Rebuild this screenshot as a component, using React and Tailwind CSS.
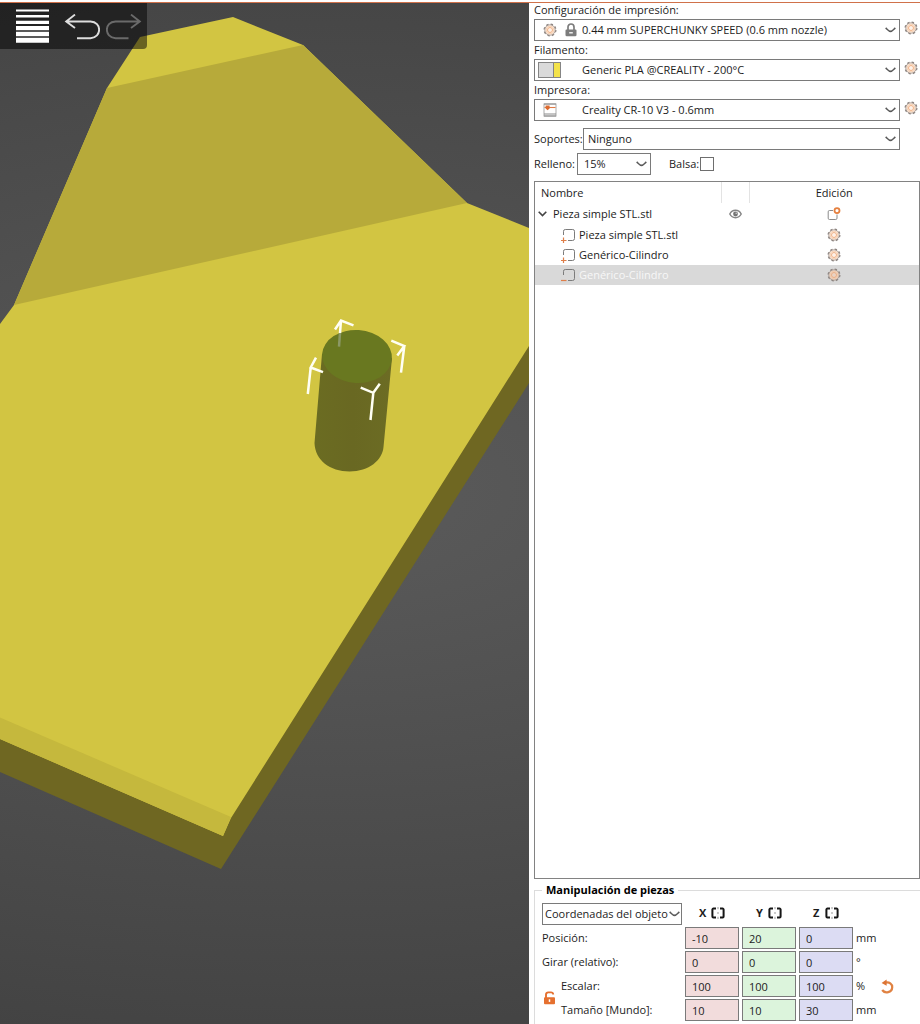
import React from "react";

function Chevron({ className = "" }) {
  return (
    <svg
      className={"pointer-events-none absolute top-1/2 h-[6px] w-[11px] -translate-y-1/2 " + className}
      viewBox="0 0 11 6"
      fill="none"
      stroke="#5a5a5a"
      strokeWidth="1.6"
      aria-hidden="true"
    >
      <path d="M0.7 0.9 C2 2 3.8 4.4 5.5 4.4 C7.2 4.4 9 2 10.3 0.9" />
    </svg>
  );
}

function Gear({ fill = "#fdf1e8" }) {
  return (
    <svg className="h-[14px] w-[14px] shrink-0" viewBox="0 0 14 14" fill="none" aria-hidden="true">
      <circle cx="7" cy="7" r="5.2" fill={fill} stroke="#a89a92" strokeWidth="0.9" />
      <circle cx="7" cy="7" r="5.9" stroke="#8c8480" strokeWidth="1.2" strokeDasharray="2.4 2.23" />
      <circle cx="7" cy="7" r="3.9" stroke="#f3c7a4" strokeWidth="0.8" />
      <circle cx="7" cy="7" r="2.5" stroke="#eeaa7c" strokeWidth="0.9" />
    </svg>
  );
}

function Lock() {
  return (
    <svg className="h-[14px] w-[12px]" viewBox="0 0 12 14" fill="none" aria-hidden="true">
      <path d="M3 7 V4 a3 3 0 0 1 6 0 V7" stroke="#7c7c7c" strokeWidth="1.7" />
      <path d="M1.5 6.5 h9 a1 1 0 0 1 1 1 v4.5 a1.3 1.3 0 0 1 -1.3 1.3 h-8.4 a1.3 1.3 0 0 1 -1.3 -1.3 v-4.5 a1 1 0 0 1 1 -1 Z" fill="#7c7c7c" />
      <path d="M4.2 9.8 h3.6" stroke="#fff" strokeWidth="1.3" />
    </svg>
  );
}

function PrinterIcon() {
  return (
    <svg className="h-[14px] w-[14px]" viewBox="0 0 14 14" fill="none" aria-hidden="true">
      <rect x="1" y="1" width="12" height="12" stroke="#ababab" />
      <path d="M1 1 h12 M1 11 h12 M1 13 h12" stroke="#8a8a8a" />
      <path d="M1.5 4.5 h11" stroke="#e07a45" strokeWidth="1.1" />
      <path d="M2.6 2.6 h4 v3 l-2 1.6 l-2 -1.6 Z" fill="#db6a30" />
    </svg>
  );
}

function Preset({ id, label, value, icon }) {
  return (
    <div>
      <label htmlFor={id} className="block h-4 leading-[14px]">
        {label}
      </label>
      <div className="flex items-center gap-1">
        <div className="relative flex-1">
          <select
            id={id}
            className="block h-[22px] w-full appearance-none border border-[#7a7a7a] bg-white pl-[47px] pr-6"
          >
            <option>{value}</option>
          </select>
          <span className="pointer-events-none absolute inset-y-0 left-0 flex items-center">{icon}</span>
          <Chevron className="right-[4px]" />
        </div>
        <button type="button" aria-label={"Editar " + label} className="-mt-1">
          <Gear />
        </button>
      </div>
    </div>
  );
}

function PartIcon({ minus }) {
  return (
    <svg className="h-[15px] w-[16px] shrink-0" viewBox="0 0 16 15" fill="none" aria-hidden="true">
      <path d="M3.5 7 V3.3 a1.8 1.8 0 0 1 1.8 -1.8 H12.7 a1.8 1.8 0 0 1 1.8 1.8 V10.5 a2 2 0 0 1 -2 2 H8" stroke="#7b7b7b" />
      <path d={minus ? "M1 12.5 H6.5" : "M1 12.5 H6.5 M3.5 9.5 V15"} stroke="#de7f4a" strokeWidth="1.2" />
    </svg>
  );
}

function ObjectRow({ name, minus, selected }) {
  return (
    <tr className={selected ? "h-5 bg-[#d9d9d9] text-[#f7f7f7]" : "h-5"} aria-selected={!!selected}>
      <td className="p-0">
        <div className="flex items-center gap-[3px] pl-[25px]">
          <PartIcon minus={minus} />
          {name}
        </div>
      </td>
      <td className="p-0" />
      <td className="p-0">
        <button type="button" aria-label={"Editar " + name} className="mx-auto block">
          <Gear fill={selected ? "#e8d3c5" : "#fdf1e8"} />
        </button>
      </td>
    </tr>
  );
}

function MirrorButton({ axis }) {
  return (
    <div className="flex items-center gap-[3px] pb-[2px] pl-[14px] font-bold">
      <span className="w-[9px]">{axis}</span>
      <button type="button" aria-label={"Reflejar " + axis}>
        <svg className="h-[12px] w-[14px]" viewBox="0 0 14 12" fill="none" stroke="#161616" aria-hidden="true">
          <path d="M5 1.6 H2.4 a1 1 0 0 0 -1 1 V9.4 a1 1 0 0 0 1 1 H5 M9 1.6 H11.6 a1 1 0 0 1 1 1 V9.4 a1 1 0 0 1 -1 1 H9" strokeWidth="2" />
          <path d="M7 0 V2.2 M7 5 V7 M7 9.8 V12" stroke="#999" strokeWidth="1" />
        </svg>
      </button>
    </div>
  );
}

function AxisInputs({ id, label, values }) {
  const tones = ["bg-[#f2dcdc]", "bg-[#dcf4dc]", "bg-[#dcdcf3]"];
  return values.map((v, i) => (
    <input
      key={i}
      id={i === 0 ? id : id + i}
      aria-label={i === 0 ? undefined : label + " " + "XYZ"[i]}
      defaultValue={v}
      className={"h-[22px] w-full min-w-0 border border-[#7a7a7a] px-[6px] " + tones[i]}
    />
  ));
}

function Viewport() {
  return (
    <main className="relative min-w-0 flex-1 overflow-hidden bg-[#4c4c4c]">
      <svg
        className="absolute inset-0 h-full w-full"
        viewBox="0 3 529 1021"
        preserveAspectRatio="xMidYMid slice"
        role="img"
        aria-label="Vista 3D de la pieza"
      >
        <defs>
          <radialGradient
            id="bed"
            gradientUnits="userSpaceOnUse"
            cx="0"
            cy="0"
            r="560"
            gradientTransform="translate(320 490) scale(2 1)"
          >
            <stop offset="0" stopColor="#5b5b5b" />
            <stop offset="1" stopColor="#434343" />
          </radialGradient>
          <linearGradient id="body" x1="0" x2="1" y1="0" y2="0">
            <stop offset="0" stopColor="#6b6c22" />
            <stop offset="0.5" stopColor="#696822" />
            <stop offset="1" stopColor="#6c6c24" />
          </linearGradient>
        </defs>
        <rect x="0" y="3" width="529" height="1021" fill="url(#bed)" />
        <path d="M0 738 L223 835 L230 817 L529 345 V383 L221 869 L0 772 Z" fill="#6f6722" />
        <path
          d="M107 88 L140 37 L233 17 L303 45 L467 203 L529 228 V346 L231 818 L223 836 L0 739 V324 L14 305 Z"
          fill="#d2c542"
        />
        <path d="M107 88 L303 45 L467 203 L14 305 Z" fill="#b7aa3a" />
        <path d="M0 717.5 L231 817 L223 836 L0 739 Z" fill="#c5b83d" />
        <path d="M322 354 L314.5 443 C315 460 330 471.5 349.5 471.5 C369 471.5 382.5 460 383.5 447 L392 358 Z" fill="url(#body)" />
        <ellipse cx="357" cy="356.5" rx="35" ry="26.5" transform="rotate(4 357 356.5)" fill="#697820" />
        <g fill="none" stroke="#fffff4" strokeWidth="2.5">
          <path d="M335 329.5 L341 320.5 L353.5 325.3 M341 320.5 L340 333" />
          <path d="M340 333 L339 346.7" stroke="#8b9866" />
          <path d="M391.3 340.7 L404.3 346 L397.3 355.5 M404.3 346 L401 372.6" />
          <path d="M316 357.7 L310.7 367.5 L323 372.2 M310.7 367.5 L307.8 394" />
          <path d="M360.7 387.7 L373.3 392.8 L379.8 383.7 M373.3 392.8 L370.5 420" />
        </g>
      </svg>
      <div className="absolute left-0 top-0 flex h-[46px] w-[147px] items-start gap-[15px] rounded-br bg-black/50 pl-4 pt-[6px]">
        <button type="button" aria-label="Capas">
          <svg className="block h-[35px] w-[33px]" viewBox="0 0 33 35" fill="#fff" aria-hidden="true">
            <path d="M0 0.4h33v2H0z M0 6h33v2.6H0z M0 11.8h33v3.2H0z M0 17h33v4.3H0z M0 22.8h33v4.4H0z M0 28.8h33v5H0z" />
          </svg>
        </button>
        <div className="flex gap-[6px] pt-[5px]">
          <button type="button" aria-label="Deshacer">
            <svg className="block h-[26px] w-[36px]" viewBox="0 0 36 26" fill="none" stroke="#dedede" strokeWidth="1.9" aria-hidden="true">
              <path d="M11 0.6 L2.2 7.5 L11 14 M2.2 7.5 H26.5 C38 8 38 23.5 26.5 24.2 H13" />
            </svg>
          </button>
          <button type="button" aria-label="Rehacer">
            <svg className="block h-[26px] w-[36px]" viewBox="0 0 36 26" fill="none" stroke="#6a6a6a" strokeWidth="1.9" aria-hidden="true">
              <path d="M25 0.6 L33.8 7.5 L25 14 M33.8 7.5 H9.5 C-2 8 -2 23.5 9.5 24.2 H22.5" />
            </svg>
          </button>
        </div>
      </div>
    </main>
  );
}

export default function App() {
  return (
    <div className="flex min-h-screen flex-col bg-white font-['Open_Sans',sans-serif] text-[11px] leading-[14px] text-[#1c1c1c]">
      <div className="h-[3px] border-b border-[#d0714a]" />
      <div className="flex flex-1">
        <Viewport />
        <aside className="flex w-[391px] shrink-0 flex-col pl-[5px]">
          <div className="flex flex-col gap-[2px] pr-[2px]">
            <Preset
              id="print"
              label="Configuración de impresión:"
              value="0.44 mm SUPERCHUNKY SPEED (0.6 mm nozzle)"
              icon={
                <span className="flex items-center gap-2 pl-[9px]">
                  <Gear />
                  <Lock />
                </span>
              }
            />
            <Preset
              id="filament"
              label="Filamento:"
              value="Generic PLA @CREALITY - 200°C"
              icon={
                <span className="ml-[4px] flex h-[16px] w-[23px] border border-[#858585] bg-[#dadada]">
                  <span className="ml-auto w-[7px] border-l border-[#858585] bg-[#f3e24a]" />
                </span>
              }
            />
            <Preset
              id="printer"
              label="Impresora:"
              value="Creality CR-10 V3 - 0.6mm"
              icon={
                <span className="pl-[9px]">
                  <PrinterIcon />
                </span>
              }
            />
          </div>
          <div className="mt-[7px] flex items-center gap-[3px] pr-[20px]">
            <label htmlFor="supports" className="w-[46px] whitespace-nowrap">
              Soportes:
            </label>
            <div className="relative flex-1">
              <select id="supports" className="block h-[22px] w-full appearance-none border border-[#7a7a7a] bg-white px-1">
                <option>Ninguno</option>
              </select>
              <Chevron className="right-[4px]" />
            </div>
          </div>
          <div className="mt-[3px] flex items-center">
            <label htmlFor="infill" className="w-[43px] whitespace-nowrap">
              Relleno:
            </label>
            <div className="relative w-[74px]">
              <select id="infill" className="block h-[22px] w-full appearance-none border border-[#7a7a7a] bg-white px-[6px]">
                <option>15%</option>
              </select>
              <Chevron className="right-[4px]" />
            </div>
            <label htmlFor="brim" className="ml-[18px] mr-px">
              Balsa:
            </label>
            <input id="brim" type="checkbox" className="h-[14px] w-[14px] appearance-none border border-[#6e6e6e] bg-white checked:bg-[#ed6b21]" />
          </div>

          <div className="mt-[6px] flex-1 border border-[#828282]">
            <table className="w-full table-fixed border-collapse text-left">
              <colgroup>
                <col />
                <col className="w-[28px]" />
                <col className="w-[170px]" />
              </colgroup>
              <thead>
                <tr className="h-[21px]">
                  <th className="border-r border-[#e3e3e3] p-0 pl-[6px] font-normal">Nombre</th>
                  <th className="border-r border-[#e3e3e3] p-0" aria-label="Visible" />
                  <th className="p-0 text-center font-normal">Edición</th>
                </tr>
              </thead>
              <tbody>
                <tr className="h-[22px]">
                  <td className="p-0">
                    <div className="flex items-center gap-[6px] pl-[3px]">
                      <svg className="h-[6px] w-[9px]" viewBox="0 0 9 6" fill="none" stroke="#444" strokeWidth="1.6" aria-hidden="true">
                        <path d="M0.7 0.8 L4.5 4.6 L8.3 0.8" />
                      </svg>
                      Pieza simple STL.stl
                    </div>
                  </td>
                  <td className="p-0">
                    <button type="button" aria-label="Mostrar u ocultar" className="mx-auto block">
                      <svg className="h-[10px] w-[13px]" viewBox="0 0 13 10" fill="none" aria-hidden="true">
                        <path d="M0.8 5 C3.4 0.1 9.6 0.1 12.2 5 C9.6 9.9 3.4 9.9 0.8 5 Z" stroke="#858585" strokeWidth="1.5" />
                        <circle cx="6.5" cy="5" r="2.4" fill="#757575" />
                        <circle cx="7.2" cy="4.3" r="0.7" fill="#ddd" />
                      </svg>
                    </button>
                  </td>
                  <td className="p-0">
                    <button type="button" aria-label="Editar objeto" className="mx-auto block">
                      <svg className="h-[14px] w-[14px]" viewBox="0 0 14 14" fill="none" aria-hidden="true">
                        <path d="M6 3.5 H2.5 a1.3 1.3 0 0 0 -1.3 1.3 V11.2 a1.3 1.3 0 0 0 1.3 1.3 H8.7 a1.3 1.3 0 0 0 1.3 -1.3 V7.5" stroke="#8a8a8a" />
                        <circle cx="10" cy="3.6" r="2.5" stroke="#e5803f" strokeWidth="1.8" fill="#fff" />
                      </svg>
                    </button>
                  </td>
                </tr>
                <ObjectRow name="Pieza simple STL.stl" />
                <ObjectRow name="Genérico-Cilindro" />
                <ObjectRow name="Genérico-Cilindro" minus selected />
              </tbody>
            </table>
          </div>

          <fieldset className="mt-1 border-l border-t border-[#dcdcdc] pb-[3px] pl-[7px]">
            <legend className="px-1 font-bold text-black">Manipulación de piezas</legend>
            <div className="mt-[6px] grid grid-cols-[140px_54px_54px_54px_auto] items-center gap-x-[3px] gap-y-[2px]">
              <div className="relative">
                <select
                  aria-label="Sistema de coordenadas"
                  className="block h-[22px] w-full appearance-none border border-[#7a7a7a] bg-white pl-[2px]"
                >
                  <option>Coordenadas del objeto</option>
                </select>
                <Chevron className="right-[2px]" />
              </div>
              <MirrorButton axis="X" />
              <MirrorButton axis="Y" />
              <MirrorButton axis="Z" />
              <span />

              <label htmlFor="pos">Posición:</label>
              <AxisInputs id="pos" label="Posición" values={["-10", "20", "0"]} />
              <span>mm</span>

              <label htmlFor="rot">Girar (relativo):</label>
              <AxisInputs id="rot" label="Girar" values={["0", "0", "0"]} />
              <span>°</span>

              <div className="row-span-2 flex items-center gap-[5px]">
                <button type="button" aria-label="Bloquear proporción" className="pl-[1px]">
                  <svg className="h-[14px] w-[13px]" viewBox="0 0 13 14" fill="none" aria-hidden="true">
                    <path d="M3 7 V3.6 a2.2 2.2 0 0 1 2.2 -2.2 H8 a2.2 2.2 0 0 1 2.2 2.2" stroke="#e5702f" strokeWidth="1.9" />
                    <rect x="1" y="6.3" width="11" height="7" rx="1" fill="#e5702f" />
                    <path d="M6.5 8.3 v2.6" stroke="#fff" strokeWidth="1.5" />
                  </svg>
                </button>
                <div className="flex flex-col gap-[10px]">
                  <label htmlFor="scale">Escalar:</label>
                  <label htmlFor="size">Tamaño [Mundo]:</label>
                </div>
              </div>
              <AxisInputs id="scale" label="Escalar" values={["100", "100", "100"]} />
              <div className="flex items-center">
                <span className="w-[24px]">%</span>
                <button type="button" aria-label="Restablecer escala">
                  <svg className="h-[15px] w-[14px]" viewBox="0 0 14 15" fill="none" aria-hidden="true">
                    <path d="M5 3.6 C9.4 2.4 12.4 5 12.2 8.4 C12 13.4 5 15 2.2 11" stroke="#e08242" strokeWidth="2.2" />
                    <path d="M6.6 0.6 V6.8 L1.6 4 Z" fill="#dd7434" />
                  </svg>
                </button>
              </div>

              <AxisInputs id="size" label="Tamaño" values={["10", "10", "30"]} />
              <span>mm</span>
            </div>
          </fieldset>
        </aside>
      </div>
    </div>
  );
}
